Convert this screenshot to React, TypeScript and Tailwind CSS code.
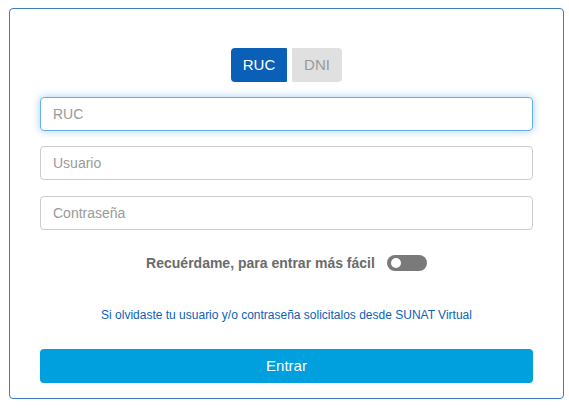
import React from 'react'

export default function App() {
  return (
    <div className="w-[569px] h-[409px] bg-white pt-[8px] pl-[9px] font-['Liberation_Sans',Arial,sans-serif]">
      <div className="w-[555px] h-[391px] border border-[#3d7cba] rounded-[4px] px-[30px] pt-[39px] flex flex-col">
        {/* document type tabs */}
        <div className="flex justify-center gap-[5px]">
          <button className="w-[56px] h-[34px] rounded-l-[4px] rounded-r-[1px] bg-[#0a60b6] text-white text-[15px]">
            RUC
          </button>
          <button className="w-[50px] h-[34px] rounded-r-[4px] rounded-l-[1px] bg-[#e0e0e0] text-[#9a9a9a] text-[15px]">
            DNI
          </button>
        </div>

        <input
          placeholder="RUC"
          className="mt-[15px] h-[34px] w-full rounded-[4px] border border-[#66afe9] px-[12px] text-[14px] placeholder:text-[#9a9a9a] outline-none shadow-[0_0_8px_rgba(102,175,233,0.6)]"
        />
        <input
          placeholder="Usuario"
          className="mt-[15px] h-[34px] w-full rounded-[4px] border border-[#cccccc] px-[12px] text-[14px] placeholder:text-[#9a9a9a] outline-none"
        />
        <input
          placeholder="Contraseña"
          className="mt-[16px] h-[34px] w-full rounded-[4px] border border-[#cccccc] px-[12px] text-[14px] placeholder:text-[#9a9a9a] outline-none"
        />

        {/* remember me */}
        <div className="mt-[25px] flex items-center justify-center gap-[12px]">
          <span className="text-[14px] font-bold text-[#6b6b6b] leading-[16px]">
            Recuérdame, para entrar más fácil
          </span>
          <div className="w-[40px] h-[16px] rounded-full bg-[#7a7a7a] flex items-center pl-[4px]">
            <div className="w-[10px] h-[10px] rounded-full bg-white" />
          </div>
        </div>

        <a className="mt-[36px] text-center text-[12px] leading-[16px] text-[#0b62b8]">
          Si olvidaste tu usuario y/o contraseña solicitalos desde SUNAT Virtual
        </a>

        <button className="mt-[26px] h-[34px] w-full rounded-[4px] bg-[#00a0df] text-white text-[15px]">
          Entrar
        </button>
      </div>
    </div>
  )
}
